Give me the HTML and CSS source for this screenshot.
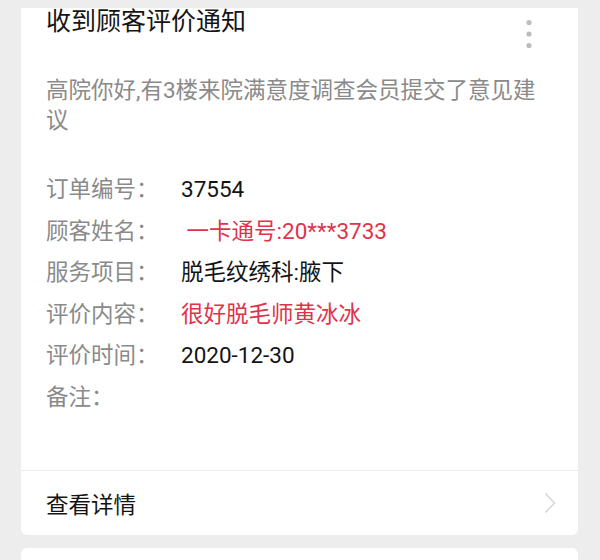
FILE: index.html
```html
<!DOCTYPE html>
<html lang="zh-CN">
<head>
<meta charset="utf-8">
<link rel="stylesheet" href="styles.css">
</head>
<body>
<div class="page">
  <div class="card first">
    <div class="card-body">
      <div class="header">
        <div class="title">收到顾客评价通知</div>
        <svg class="more" width="8" height="32" viewBox="0 0 8 32">
          <circle cx="4" cy="4.5" r="2.6" fill="#bdbdbd"/>
          <circle cx="4" cy="16" r="2.6" fill="#bdbdbd"/>
          <circle cx="4" cy="27.5" r="2.6" fill="#bdbdbd"/>
        </svg>
      </div>
      <p class="desc">高院你好,有3楼来院满意度调查会员提交了意见建议</p>
      <div class="fields">
        <div class="label">订单编号：</div><div class="value">37554</div>
        <div class="label">顾客姓名：</div><div class="value red">&nbsp;一卡通号:20***3733</div>
        <div class="label">服务项目：</div><div class="value">脱毛纹绣科:腋下</div>
        <div class="label">评价内容：</div><div class="value red">很好脱毛师黄冰冰</div>
        <div class="label">评价时间：</div><div class="value">2020-12-30</div>
        <div class="label">备注：</div><div class="value"></div>
      </div>
    </div>
    <div class="footer">
      <span class="link">查看详情</span>
      <svg class="chev" width="12" height="22" viewBox="0 0 12 22">
        <path d="M1.5 1.5 L10.5 11 L1.5 20.5" fill="none" stroke="#d4d4d4" stroke-width="1.4"/>
      </svg>
    </div>
  </div>
  <div class="card next"></div>
</div>
</body>
</html>
```

FILE: styles.css
```css
html, body {
  margin: 0;
  padding: 0;
  background: #ededed;
}
body {
  font-family: "Roboto", "Noto Sans CJK SC", sans-serif;
  width: 600px;
  height: 560px;
  overflow: hidden;
}
.page {
  padding: 8px 22px 0 21px;
  display: flex;
  flex-direction: column;
  gap: 13px;
}
.card {
  background: #fff;
  border-radius: 6px;
}
.first {
  border-top-left-radius: 0;
  border-top-right-radius: 0;
}
.card-body {
  padding: 0 0 52px 25px;
}
.header {
  display: flex;
  justify-content: space-between;
  align-items: flex-start;
  height: 28px;
  padding-right: 45px;
}
.title {
  font-size: 25px;
  line-height: 28px;
  color: #151515;
}
.more {
  margin-top: 10px;
  flex-shrink: 0;
}
.desc {
  margin: 39px 0 0 0;
  font-size: 22.5px;
  line-height: 30px;
  color: #8a8a8a;
  padding-right: 30px;
}
.fields {
  margin-top: 34px;
  display: grid;
  grid-template-columns: 135px 1fr;
  font-size: 22.5px;
  line-height: 41.5px;
}
.label {
  color: #8a8a8a;
}
.value {
  color: #141414;
}
.red {
  color: #e0334a;
}
.footer {
  border-top: 1px solid #ececec;
  height: 64px;
  display: flex;
  align-items: center;
  justify-content: space-between;
  padding: 0 22px 0 25px;
}
.link {
  font-size: 22.5px;
  color: #141414;
}
.next {
  height: 40px;
}
```
